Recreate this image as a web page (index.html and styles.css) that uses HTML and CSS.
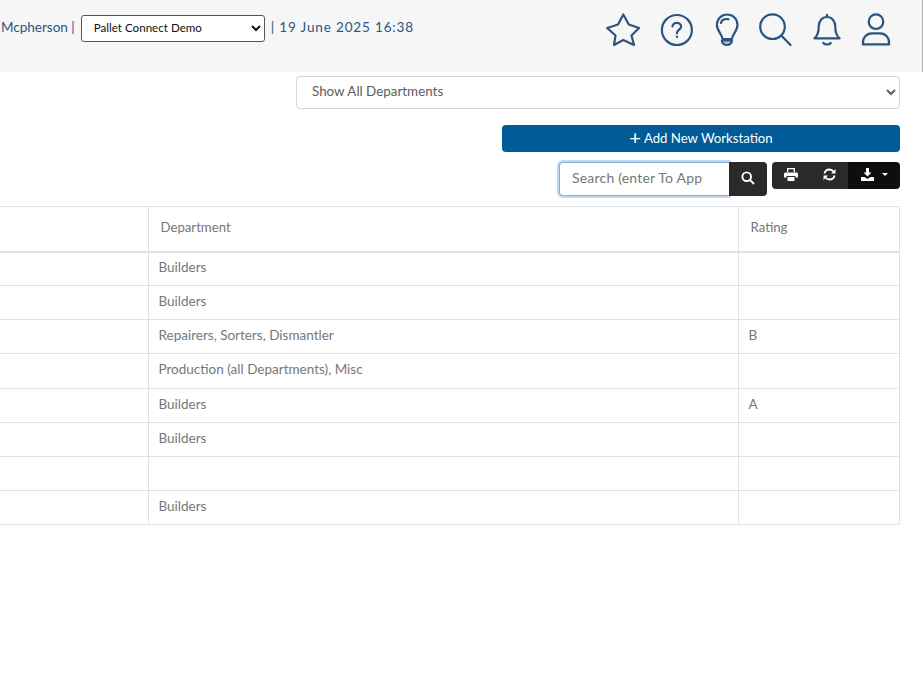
FILE: index.html
```html
<!DOCTYPE html>
<html lang="en">
<head>
<meta charset="utf-8">
<title>Workstations</title>
<link rel="stylesheet" href="styles.css">
</head>
<body>
<header class="topbar">
  <div class="meta">
    <span class="who">Mcpherson |</span>
    <select class="site"><option>Pallet Connect Demo</option></select>
    <span class="when">| 19 June 2025 16:38</span>
  </div>
  <nav class="icons">
    <svg class="ic" width="34" height="34" viewBox="0 0 34 34"><path d="M17.300 1.500L22.800 11.500 33 15 25.500 22.500 28 32 17.300 27 8 32 9.500 22.500 1.200 15 12 11.500z"/></svg>
    <svg class="ic" width="34" height="34" viewBox="0 0 34 34"><circle cx="17.900" cy="17" r="15"/><path d="M13.500 13.500c0-2.200 2-3.600 4.300-3.600s4.300 1.400 4.300 3.600c0 3.200-4.200 3.200-4.200 6.800"/><path d="M17.900 23.500v.6"/></svg>
    <svg class="ic" width="26" height="34" viewBox="0 0 26 34"><path d="M9.500 26c0-4.500-5.600-7.500-5.600-14.300C3.900 6 8.500 1.500 14.200 1.500S24.500 6 24.500 11.700c0 6.800-5.600 9.800-5.600 14.300z"/><path d="M7.900 10c.4-2.800 3.500-4.800 7.600-3.700"/><path class="solid" d="M8.900 27.500h10c0 2.500-2 4.500-5 4.500s-5-2-5-4.500z"/></svg>
    <svg class="ic" width="34" height="34" viewBox="0 0 34 34"><circle cx="14.500" cy="13.700" r="12.300"/><path d="M23.500 22.800L32.500 32"/></svg>
    <svg class="ic" width="30" height="34" viewBox="0 0 30 34"><path d="M2.400 25.300c3-2.300 4.300-5 4.300-11.300 0-6 3.400-10 8.300-10s8.300 4 8.300 10c0 6.300 1.300 9 4.300 11.300z"/><path d="M15 1.800v2"/><path d="M11.300 30c1.500 2 6 2 7.400 0"/></svg>
    <svg class="ic" width="30" height="34" viewBox="0 0 30 34"><circle cx="15" cy="8.700" r="7.300"/><path d="M1.900 31.300c-.5-6.500 3.500-11 9-11h8.200c5.500 0 9.500 4.500 9 11z"/></svg>
  </nav>
</header>
<main class="content">
  <div class="filter-row">
    <select class="dept"><option>Show All Departments</option></select>
  </div>
  <div class="add-row">
    <button class="add"><span class="plus">+</span> Add New Workstation</button>
  </div>
  <div class="tools">
    <div class="search">
      <input class="search-input" placeholder="Search (enter To Apply)">
      <button class="search-btn"><svg width="14" height="14" viewBox="0 0 13 13"><circle cx="5.300" cy="5.300" r="4"/><path d="M8.300 8.300l3.800 3.800"/></svg></button>
    </div>
    <div class="btns">
      <button class="tool"><svg width="14" height="13" viewBox="0 0 14 13"><path class="fill" d="M3 0h8v4H9.700V1.300H4.300V4H3zM1.500 4.500h11c.8 0 1.500.7 1.500 1.500v3.500h-2.500V8h-9v1.500H0V6c0-.8.7-1.500 1.500-1.500zM3.500 9h7v4h-7z"/></svg></button>
      <button class="tool"><svg width="13" height="13" viewBox="0 0 13 13"><path d="M1.500 5.500C2 3 4 1.500 6.500 1.500c2 0 3.300 1 4.300 2.300"/><path d="M11.500 7.500C11 10 9 11.500 6.500 11.500c-2 0-3.300-1-4.300-2.300"/><path class="fill" d="M12.500 1v4.500H8zM.5 12V7.500H5z"/></svg></button>
      <button class="tool dark"><svg width="13" height="13" viewBox="0 0 13 13"><path class="fill" d="M5 0h3v4.500h2.500L6.500 8.500 2.500 4.500H5zM0 9h3.500l3 2 3-2H13v4H0z"/></svg><span class="caret"></span></button>
    </div>
  </div>
  <table class="grid">
    <colgroup><col class="c1"><col class="c2"><col class="c3"></colgroup>
    <thead><tr><th></th><th>Department</th><th>Rating</th></tr></thead>
    <tbody>
      <tr><td></td><td>Builders</td><td></td></tr>
      <tr><td></td><td>Builders</td><td></td></tr>
      <tr><td></td><td>Repairers, Sorters, Dismantler</td><td>B</td></tr>
      <tr><td></td><td>Production (all Departments), Misc</td><td></td></tr>
      <tr><td></td><td>Builders</td><td>A</td></tr>
      <tr><td></td><td>Builders</td><td></td></tr>
      <tr><td></td><td></td><td></td></tr>
      <tr><td></td><td>Builders</td><td></td></tr>
    </tbody>
  </table>
</main>
</body>
</html>
```
FILE: styles.css
```css
html, body { margin: 0; padding: 0; background: #fff; overflow: hidden; }
body { font-family: "Lato", "Liberation Sans", sans-serif; color: #666; font-size: 13px; }
.topbar { height: 72px; width: 923px; background: #f6f6f6; border-right: 1px solid #b4b4b4; display: flex; justify-content: space-between; align-items: flex-start; box-sizing: border-box; padding-right: 31px; }
.meta { display: flex; align-items: flex-start; gap: 6px; padding: 15px 0 0 1px; color: #2b5580; font-size: 13.500px; }
.who { line-height: 24px; }
.when { letter-spacing: .85px; line-height: 24px; }
.site { width: 184px; height: 27px; font: 11.600px "Lato", sans-serif; color: #111; background: #fff; border: 1px solid #555; border-radius: 3px; padding: 0 0 3px 8px; }
.icons { display: flex; align-items: center; gap: 19.400px; padding-top: 13px; }
.ic { fill: none; stroke: #2b5580; stroke-width: 2.200; stroke-linejoin: round; stroke-linecap: round; flex: none; }
.ic .solid { fill: #2b5580; fill-opacity: .35; }
.content { display: flex; flex-direction: column; width: 900px; }
.filter-row { display: flex; justify-content: flex-end; padding-top: 4px; }
.dept { width: 604px; height: 33px; padding: 0 0 4px 11px; font: 13.400px "Lato", sans-serif; color: #5e5e5e; background: #fff; border: 1px solid #d5d5d5; border-radius: 4px; }
.add-row { display: flex; justify-content: flex-end; padding-top: 16px; }
.add { width: 398px; height: 27px; border: 0; border-radius: 4px; background: #005b96; color: #fff; font: 13.200px "Lato", sans-serif; padding: 0 0 4px; }
.plus { font-size: 20px; line-height: 1; vertical-align: -2px; }
.tools { display: flex; justify-content: flex-end; gap: 5px; padding-top: 10px; align-items: flex-start; }
.search { display: flex; }
.search-input { width: 170px; height: 34px; box-sizing: border-box; padding: 0 26px 4px 12px; font: 14px "Lato", sans-serif; letter-spacing: .2px; color: #666; border: 1px solid #7fb0dc; border-right: 0; border-radius: 4px 0 0 4px; box-shadow: 0 0 0 2px #c3d9ee; outline: 0; }
.search-input::placeholder { color: #777; }
.search-btn { width: 38px; height: 34px; border: 0; background: #2a2a2a; border-radius: 0 4px 4px 0; display: flex; align-items: center; justify-content: center; padding: 0 0 2px; position: relative; }
.search-btn svg, .tool svg { fill: none; stroke: #fff; stroke-width: 1.800; }
.tool svg .fill { fill: #fff; stroke: none; }
.btns { display: flex; border-radius: 4px; overflow: hidden; height: 27px; }
.tool { width: 38px; height: 27px; border: 0; background: #2a2a2a; padding: 0 0 3px; display: flex; align-items: center; justify-content: center; gap: 8px; }
.tool.dark { width: 52px; background: #0e0e0e; }
.caret { width: 0; height: 0; border: 3px solid transparent; border-top-color: #fff; border-bottom: 0; }
.grid { border-collapse: collapse; table-layout: fixed; width: 899px; margin-top: 10px; font-size: 13.500px; color: #777; }
.c1 { width: 148px; }
.c2 { width: 590px; }
.c3 { width: 161px; }
.grid th { box-sizing: border-box; height: 45px; padding: 0 12px 3px; font-weight: 400; font-size: 13.200px; text-align: left; border: 1px solid #e2e2e2; border-bottom: 2px solid #e2e2e2; }
.grid td { box-sizing: border-box; height: 34.125px; padding: 0 10px 3px; border: 1px solid #e2e2e2; }
.grid th:first-child, .grid td:first-child { border-left: 0; }
```
